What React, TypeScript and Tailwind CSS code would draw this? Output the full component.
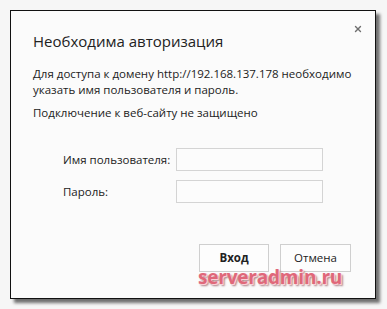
import { X } from "lucide-react";

export default function App() {
  return (
    <div className="w-[387px] h-[309px] bg-[#f6f6f6] pl-[10px] pt-[10px] relative overflow-hidden font-['Open_Sans','Noto_Sans',sans-serif]">
      <div className="w-[366px] h-[289px] bg-[#fbfbfb] border border-[#111] shadow-[4px_4px_3px_rgba(0,0,0,0.55)] flex flex-col relative">
        <button className="absolute right-[12px] top-[13px] text-[#6f6f6f]">
          <X size={10} strokeWidth={3.2} />
        </button>
        <div className="pl-[22px] pr-[20px] pt-[20px]">
          <h1 className="text-[15px] leading-[20px] text-[#222]">Необходима авторизация</h1>
          <p className="mt-[15px] text-[11.5px] leading-[16px] text-[#222]">
            Для доступа к домену http://192.168.137.178 необходимо указать имя пользователя и пароль.
          </p>
          <p className="mt-[7px] text-[11.5px] leading-[16px] text-[#222]">Подключение к веб-сайту не защищено</p>
        </div>
        <div className="mt-[27px] flex flex-col gap-[9px] pl-[52px]">
          <div className="flex items-center">
            <span className="w-[113px] text-[11.5px] text-[#222]">Имя пользователя:</span>
            <input className="w-[147px] h-[23px] border border-[#d4d4d4] bg-[#fcfcfc] outline-none" />
          </div>
          <div className="flex items-center">
            <span className="w-[113px] text-[11.5px] text-[#222]">Пароль:</span>
            <input type="password" className="w-[147px] h-[23px] border border-[#d4d4d4] bg-[#fcfcfc] outline-none" />
          </div>
        </div>
        <div className="mt-auto mb-[26px] flex justify-end gap-[11px] pr-[24px]">
          <button className="w-[70px] h-[28px] border border-[#cfcfcf] bg-[#fdfdfd] text-[11.5px] font-bold text-[#222]">Вход</button>
          <button className="w-[71px] h-[28px] border border-[#cfcfcf] bg-[#fdfdfd] text-[11.5px] text-[#222]">Отмена</button>
        </div>
      </div>
      <span className="absolute left-[198px] top-[268px] text-[19px] font-bold text-[#e0687a] leading-none tracking-[-0.2px] [text-shadow:1px_1px_0_#fbd0d6,2px_2px_2px_rgba(110,40,50,0.6)]">
        serveradmin.ru
      </span>
    </div>
  );
}
